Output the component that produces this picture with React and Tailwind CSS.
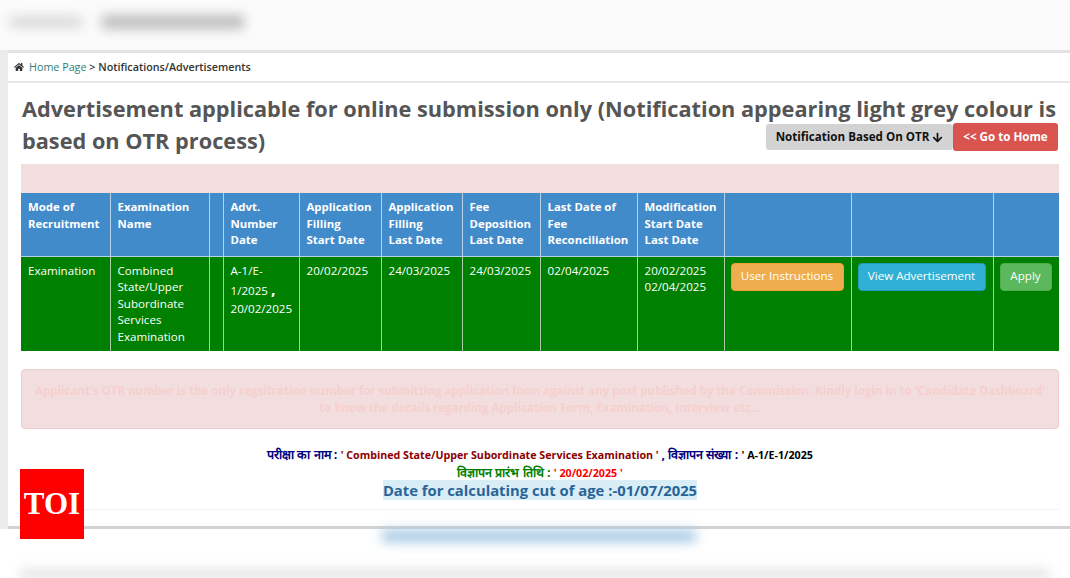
import React from "react";
import { FaHome, FaArrowDown } from "react-icons/fa";

const headers = [
  ["Mode of", "Recruitment"],
  ["Examination", "Name"],
  [],
  ["Advt.", "Number", "Date"],
  ["Application", "Filling", "Start Date"],
  ["Application", "Filling", "Last Date"],
  ["Fee", "Deposition", "Last Date"],
  ["Last Date of", "Fee", "Reconciliation"],
  ["Modification", "Start Date", "Last Date"],
  [],
  [],
  [],
];
const widths = ["w-[89px]", "w-[99px]", "w-[14px]", "w-[76px]", "w-[82px]", "w-[81px]", "w-[78px]", "w-[97px]", "w-[87px]", "w-[127px]", "w-[142px]", "w-[66px]"];
const td = "border border-[#a9c9a9] align-top px-[7px] pt-[6px] pb-0 font-normal";
const btn = "h-[28px] rounded-[4px] border text-[11.6px] text-white flex items-center justify-center";

export default function App() {
  return (
    <div className="relative flex h-[578px] w-[1070px] flex-col overflow-hidden bg-white text-[11.6px] text-[#333] font-['Open_Sans',sans-serif]">
      <div className="flex h-[50px] shrink-0 items-center gap-[20px] bg-[#fbfbfb] pb-[6px] pl-[10px]">
        <div className="h-[10px] w-[72px] bg-[#d4d4d4] blur-[6px]" />
        <div className="h-[14px] w-[142px] bg-[#bcbcbc] blur-[6px]" />
      </div>
      <div className="flex h-[479px] shrink-0">
        <div className="w-[8px] shrink-0 bg-[#ececec]" />
        <div className="flex min-w-0 flex-1 flex-col">
          <div className="h-[3px] shrink-0 bg-[#e4e4e4]" />
          <nav className="flex h-[28px] shrink-0 items-center gap-[5px] bg-white pl-[6px] text-[10.75px] font-semibold">
            <FaHome className="text-[10px] text-[#333]" />
            <p className="font-normal">
              <span className="text-[#2f7d74]">Home Page</span>
              <span className="font-semibold text-[#333]"> &gt; Notifications/Advertisements</span>
            </p>
          </nav>
          <div className="h-[2px] shrink-0 bg-[#e8e8e8]" />
          <main className="flex min-h-0 flex-1 flex-col pl-[13px] pr-[12px]">
            <h1 className="mt-[10px] pl-[1px] text-[21.72px] leading-[32px] font-bold text-[#555]">
              Advertisement applicable for online submission only (Notification appearing light grey colour is based on OTR process)
              <span className="float-right mt-[-2px] flex items-center text-[11.6px] leading-none font-bold">
                <button className="flex h-[26px] w-[187px] items-center justify-center gap-[3px] rounded-[3px] bg-[#d3d3d3] text-[#111]">
                  Notification Based On OTR <FaArrowDown className="text-[11px]" />
                </button>
                <button className="h-[28px] w-[105px] rounded-[3px] bg-[#d9534f] text-white">&lt;&lt; Go to Home</button>
              </span>
            </h1>
            <div className="mt-[7px] h-[29px] w-[1038px] shrink-0 bg-[#f2dede]" />
            <table className="w-[1038px] shrink-0 table-fixed border-collapse border-hidden leading-[16.5px] text-white">
              <colgroup>
                {widths.map((w, i) => (
                  <col key={i} className={w} />
                ))}
              </colgroup>
              <thead>
                <tr className="h-[63px] bg-[#428bca]">
                  {headers.map((h, i) => (
                    <th key={i} className="border border-[#b7d2e8] px-[7px] pt-[6px] text-left align-top text-[11.4px] font-bold">
                      {h.map((line, j) => (
                        <div key={j}>{line}</div>
                      ))}
                    </th>
                  ))}
                </tr>
              </thead>
              <tbody>
                <tr className="h-[95px] bg-[#008000]">
                  <td className={td}>Examination</td>
                  <td className={td}>Combined State/Upper Subordinate Services Examination</td>
                  <td className={td}></td>
                  <td className={td}>
                    <div>A-1/E-</div>
                    <div className="leading-[21px]">
                      1/2025 <b className="text-[16px]">,</b>
                    </div>
                    <div>20/02/2025</div>
                  </td>
                  <td className={td}>20/02/2025</td>
                  <td className={td}>24/03/2025</td>
                  <td className={td}>24/03/2025</td>
                  <td className={td}>02/04/2025</td>
                  <td className={td}>
                    <div>20/02/2025</div>
                    <div>02/04/2025</div>
                  </td>
                  <td className={td + " !px-[6px]"}>
                    <button className={btn + " w-[113px] border-[#eea236] bg-[#f0ad4e]"}>User Instructions</button>
                  </td>
                  <td className={td + " !pl-[6px]"}>
                    <button className={btn + " w-[128px] border-[#269abc] bg-[#31b0d5]"}>View Advertisement</button>
                  </td>
                  <td className={td + " !pl-[6px] !pr-0"}>
                    <button className={btn + " w-[52px] border-[#4cae4c] bg-[#5cb85c]"}>Apply</button>
                  </td>
                </tr>
              </tbody>
            </table>
            <div className="mt-[18px] flex h-[60px] w-[1038px] shrink-0 flex-col justify-center rounded-[4px] border border-[#ebcccc] bg-[#f2dede] text-center text-[11.5px] leading-[17px] font-bold text-[#f7cfcf]">
              <p>Applicant's OTR number is the only regsitration number for submitting application form against any post published by the Commission. Kindly login in to 'Candidate Dashboard'</p>
              <p>to know the details regarding Application Form, Examination, Interview etc...</p>
            </div>
            <div className="mt-[17px] w-[1038px] text-center font-bold">
              <p className="text-[10.7px] leading-[17px]">
                <span className="text-[12.5px] text-[#000080]">परीक्षा का नाम : </span>
                <span className="text-[#8b0000]">' Combined State/Upper Subordinate Services Examination ' </span>
                <span className="text-[12.5px] text-[#000080]">, विज्ञापन संख्या : </span>
                <span className="text-black">' A-1/E-1/2025</span>
              </p>
              <p className="text-[10.7px] leading-[17px]">
                <span className="text-[12.5px] text-[#008000]">विज्ञापन प्रारंभ तिथि : </span>
                <span className="text-[#ff0000]">' 20/02/2025 '</span>
              </p>
              <p className="text-[14.8px] leading-[17px]">
                <span className="bg-[#d9edf7] text-[#2a6496]">Date for calculating cut of age :-01/07/2025</span>
              </p>
            </div>
            <div className="mt-[10px] h-px w-[1038px] shrink-0 bg-[#f2f2f2]" />
            <div className="flex-1" />
          </main>
          <div className="h-[3px] shrink-0 bg-[#d2d2d2]" />
        </div>
      </div>
      <div className="flex flex-1 flex-col bg-white">
        <div className="ml-[382px] mt-[1px] h-[12px] w-[314px] shrink-0 bg-[#a4c8e4] blur-[6px]" />
        <div className="flex-1" />
        <div className="mx-[20px] h-[8px] bg-[#dcdcdc] blur-[6px]" />
      </div>
      <div className="absolute left-[20px] top-[469px] flex h-[70px] w-[64px] items-center justify-center bg-[#ff0000] font-['Liberation_Serif',serif] text-[31px] font-bold text-white">
        TOI
      </div>
    </div>
  );
}
